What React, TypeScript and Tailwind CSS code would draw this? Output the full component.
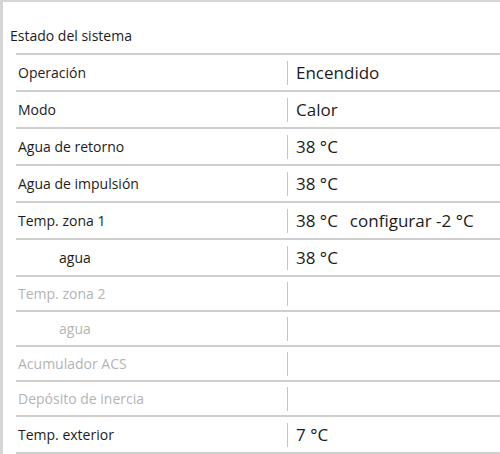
import React from 'react';

type Row = {
  label: string;
  value?: string;
  extra?: string;
  indent?: boolean;
  disabled?: boolean;
};

const rows: Row[] = [
  { label: 'Operación', value: 'Encendido' },
  { label: 'Modo', value: 'Calor' },
  { label: 'Agua de retorno', value: '38 °C' },
  { label: 'Agua de impulsión', value: '38 °C' },
  { label: 'Temp. zona 1', value: '38 °C', extra: 'configurar -2 °C' },
  { label: 'agua', value: '38 °C', indent: true },
  { label: 'Temp. zona 2', disabled: true },
  { label: 'agua', indent: true, disabled: true },
  { label: 'Acumulador ACS', disabled: true },
  { label: 'Depósito de inercia', disabled: true },
  { label: 'Temp. exterior', value: '7 °C' },
];

const StatusRow = ({ row }: { row: Row }) => {
  const textColor = row.disabled ? 'text-[#b4b4b4]' : 'text-[#1c1c1c]';
  return (
    <div className={`flex items-center border-b-2 border-[#cfcfcf] ${row.value ? 'h-[37px]' : 'h-[35px]'}`}>
      <div className={`w-[271px] text-[14px] ${textColor} ${row.indent ? 'pl-[43px]' : 'pl-[2px]'}`}>
        {row.label}
      </div>
      <div className="flex items-center border-l border-[#c4c4c4] pl-[8px] h-[24px] text-[17px] text-[#1c1c1c]">
        {row.value && <span>{row.value}</span>}
        {row.extra && <span className="ml-[12px]">{row.extra}</span>}
      </div>
    </div>
  );
};

const App = () => {
  return (
    <div className="w-[500px] h-[454px] bg-white overflow-hidden" style={{ fontFamily: '"Open Sans", "Noto Sans", sans-serif' }}>
      <div className="h-full border-t-2 border-l-[3px] border-[#d6d6d6] pl-[7px]">
        <div className="h-[51px] flex items-end pb-[7px] text-[14px] text-[#1c1c1c]">Estado del sistema</div>
        <div className="ml-[6px] border-t-2 border-[#cfcfcf]">
          {rows.map((row, i) => (
            <StatusRow key={i} row={row} />
          ))}
        </div>
      </div>
    </div>
  );
};

export default App;
